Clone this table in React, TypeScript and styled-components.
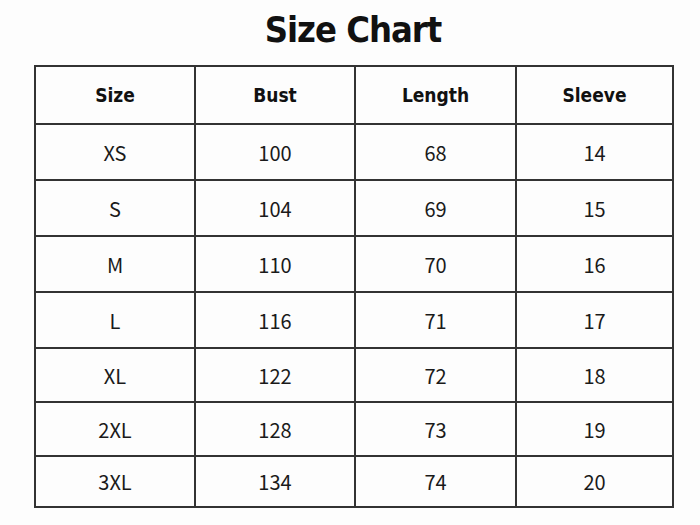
import React from 'react';
import styled, { createGlobalStyle } from 'styled-components';

const GlobalStyle = createGlobalStyle`
    html, body {
        margin: 0;
        padding: 0;
        background: #ffffff;
    }
`;

const Page = styled.div`
    width: 700px;
    height: 525px;
    overflow: hidden;
    background: #fdfdfd;
`;

const Chart = styled.div`
    width: 638px;
    margin-left: 34px;
`;

const Title = styled.h1`
    margin: 0;
    height: 65px;
    line-height: 60px;
    text-align: center;
    color: #111;
    font-family: "DejaVu Sans Condensed", sans-serif;
    font-size: 36px;
    font-weight: bold;
    letter-spacing: -1px;
`;

const Table = styled.table`
    border-collapse: collapse;
    table-layout: fixed;
    width: 100%;
    border: 2px solid #333;
`;

const HeadCell = styled.th`
    height: 56px;
    padding: 0;
    border: 2px solid #333;
    text-align: center;
    vertical-align: middle;
    color: #111;
    font-family: "DejaVu Sans Condensed", sans-serif;
    font-size: 19px;
    font-weight: bold;
`;

const Cell = styled.td<{ $h: number }>`
    height: ${p => p.$h}px;
    padding: 0;
    border: 2px solid #333;
    text-align: center;
    vertical-align: middle;
    color: #1a1a1a;
    font-family: "Noto Sans CJK JP", "Noto Sans", sans-serif;
    font-size: 20px;
    font-weight: 400;
`;

const columns = ['Size', 'Bust', 'Length', 'Sleeve'];
const widths = [160, 160, 161, 157];

const rows = [
    ['XS', '100', '68', '14'],
    ['S', '104', '69', '15'],
    ['M', '110', '70', '16'],
    ['L', '116', '71', '17'],
    ['XL', '122', '72', '18'],
    ['2XL', '128', '73', '19'],
    ['3XL', '134', '74', '20'],
];
const heights = [54, 54, 54, 54, 52, 52, 49];

const App = () => (
    <Page>
        <GlobalStyle />
        <Chart>
            <Title>Size Chart</Title>
            <Table>
                <colgroup>
                    {widths.map((w, i) => <col key={i} style={{ width: w }} />)}
                </colgroup>
                <thead>
                    <tr>
                        {columns.map(c => <HeadCell key={c}>{c}</HeadCell>)}
                    </tr>
                </thead>
                <tbody>
                    {rows.map((r, i) => (
                        <tr key={r[0]}>
                            {r.map((v, j) => <Cell key={j} $h={heights[i]}>{v}</Cell>)}
                        </tr>
                    ))}
                </tbody>
            </Table>
        </Chart>
    </Page>
);

export default App;
